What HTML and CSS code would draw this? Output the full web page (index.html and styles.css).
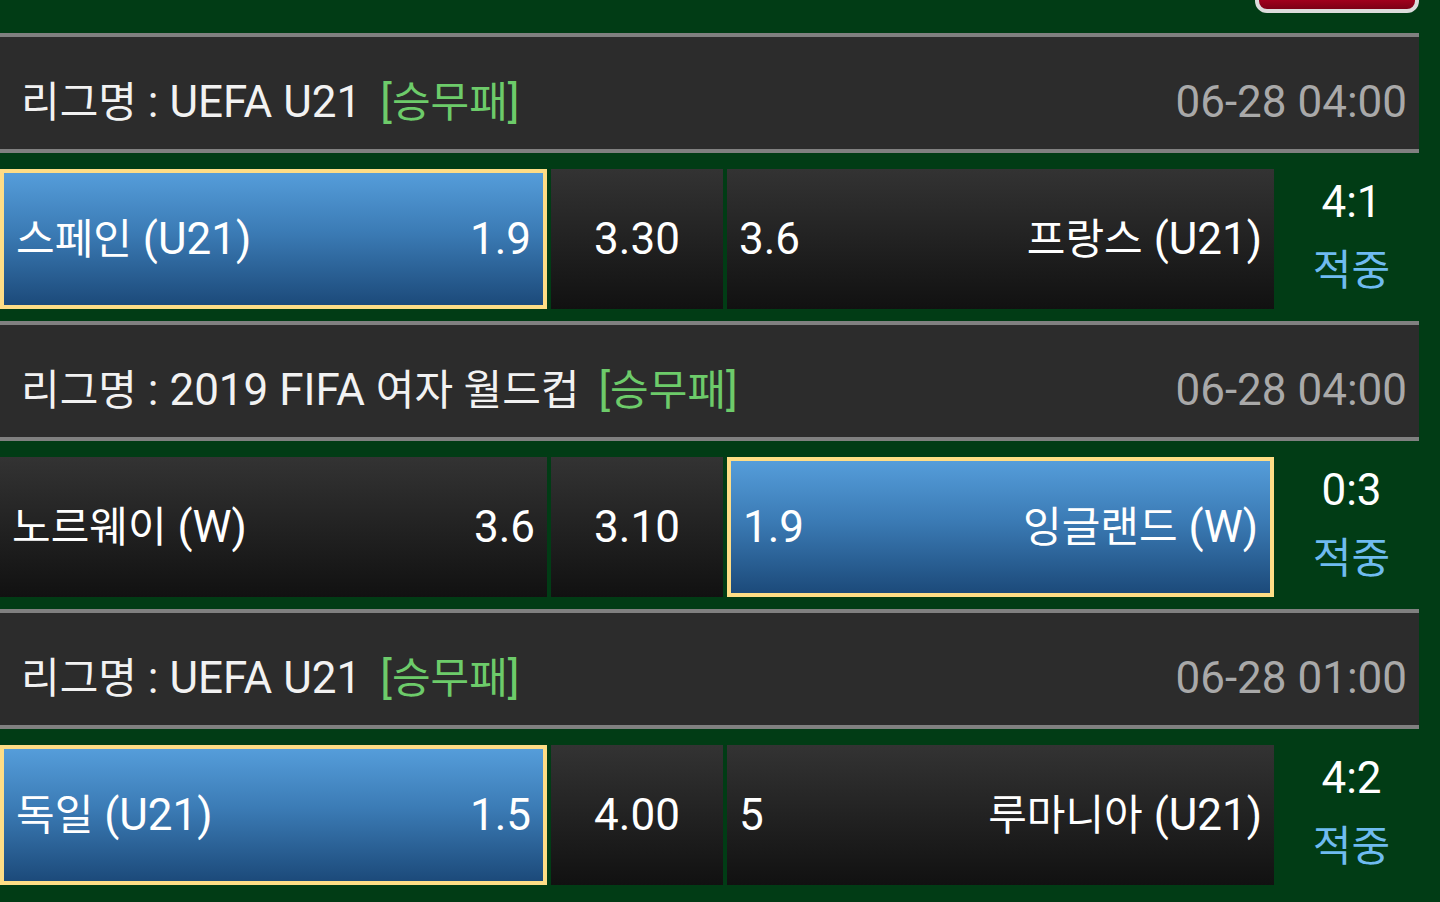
FILE: index.html
```html
<!DOCTYPE html>
<html lang="ko">
<head>
<meta charset="utf-8">
<title>승무패 결과</title>
<link rel="stylesheet" href="styles.css">
</head>
<body>
<div class="page">
  <div class="topbar">
    <div class="red-btn"></div>
  </div>

  <section class="game">
    <div class="league">
      <div class="league-name"><span class="ko">리그명</span> : UEFA U21<span class="type">[<span class="ko">승무패</span>]</span></div>
      <div class="league-date">06-28 04:00</div>
    </div>
    <div class="bet-row">
      <div class="cell team home selected"><span class="name"><span class="ko">스페인</span> (U21)</span><span class="odd">1.9</span></div>
      <div class="cell draw">3.30</div>
      <div class="cell team away"><span class="odd">3.6</span><span class="name"><span class="ko">프랑스</span> (U21)</span></div>
      <div class="result"><div class="score">4:1</div><div class="hit ko">적중</div></div>
    </div>
  </section>

  <section class="game">
    <div class="league">
      <div class="league-name"><span class="ko">리그명</span> : 2019 FIFA <span class="ko">여자 월드컵</span><span class="type">[<span class="ko">승무패</span>]</span></div>
      <div class="league-date">06-28 04:00</div>
    </div>
    <div class="bet-row">
      <div class="cell team home"><span class="name"><span class="ko">노르웨이</span> (W)</span><span class="odd">3.6</span></div>
      <div class="cell draw">3.10</div>
      <div class="cell team away selected"><span class="odd">1.9</span><span class="name"><span class="ko">잉글랜드</span> (W)</span></div>
      <div class="result"><div class="score">0:3</div><div class="hit ko">적중</div></div>
    </div>
  </section>

  <section class="game">
    <div class="league">
      <div class="league-name"><span class="ko">리그명</span> : UEFA U21<span class="type">[<span class="ko">승무패</span>]</span></div>
      <div class="league-date">06-28 01:00</div>
    </div>
    <div class="bet-row">
      <div class="cell team home selected"><span class="name"><span class="ko">독일</span> (U21)</span><span class="odd">1.5</span></div>
      <div class="cell draw">4.00</div>
      <div class="cell team away"><span class="odd">5</span><span class="name"><span class="ko">루마니아</span> (U21)</span></div>
      <div class="result"><div class="score">4:2</div><div class="hit ko">적중</div></div>
    </div>
  </section>
</div>
</body>
</html>
```

FILE: styles.css
```css
* { box-sizing: border-box; }

html, body {
  margin: 0;
  padding: 0;
  background: #013c15;
  height: 100%;
  overflow: hidden;
}

body {
  font-family: Roboto, "Noto Sans CJK KR", sans-serif;
  font-size: 44px;
  color: #ffffff;
}

.ko {
  font-size: 42px;
}

.page {
  width: 1419px;
}

.topbar {
  height: 33px;
  display: flex;
  justify-content: flex-end;
}

.red-btn {
  width: 164px;
  height: 44px;
  margin-top: -31px;
  border: 4px solid #dcdcdc;
  border-radius: 12px;
  background: linear-gradient(to bottom, #c0102a 0%, #a8001e 70%, #7c0016 100%);
}

.league {
  height: 120px;
  border-top: 4px solid #808080;
  border-bottom: 4px solid #808080;
  background: #2c2c2c;
  display: flex;
  align-items: center;
  justify-content: space-between;
  padding: 18px 12px 0 21px;
  line-height: 50px;
}

.league-name {
  color: #f2f2f2;
  white-space: nowrap;
}

.type {
  color: #6dcb6a;
  margin-left: 19px;
}

.league-date {
  color: #a9a9a9;
}

.bet-row {
  display: grid;
  grid-template-columns: 547px 172px 547px 1fr;
  column-gap: 4px;
  height: 140px;
  margin: 16px 0 12px;
}

.cell {
  background: linear-gradient(to bottom, #333333 0%, #111111 100%);
  display: flex;
  align-items: center;
  padding: 0 12px;
  white-space: nowrap;
  line-height: 50px;
}

.team {
  justify-content: space-between;
}

.draw {
  justify-content: center;
}

.selected {
  background: linear-gradient(to bottom, #559dda 0%, #3b7bb5 45%, #1c4a7a 100%);
  border: 4px solid #fedd86;
}

.result {
  display: flex;
  flex-direction: column;
  justify-content: center;
  align-items: center;
  padding-left: 6px;
}

.score {
  line-height: 64px;
  color: #ffffff;
}

.hit {
  line-height: 74px;
  color: #6fbbf0;
}
```
